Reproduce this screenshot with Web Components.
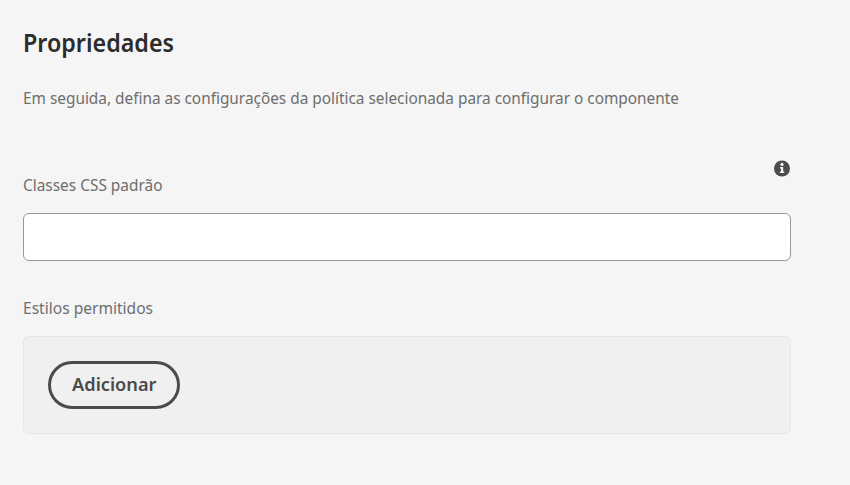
<!DOCTYPE html>
<html lang="pt-BR"><head><meta charset="utf-8"><title>Propriedades</title>
<style>html,body{margin:0;background:#f5f5f5}body{font-family:"Noto Sans","Open Sans",sans-serif}</style></head>
<body>
<policy-properties>
<section-heading slot="heading">Propriedades</section-heading>
<fitted-text slot="description" width="656">Em seguida, defina as configurações da política selecionada para configurar o componente</fitted-text>
<text-field>Classes CSS padrão</text-field>
<style-list>Estilos permitidos</style-list>
</policy-properties>
<script>
class Base extends HTMLElement{constructor(){super();this.attachShadow({mode:'open'}).innerHTML=this.constructor.markup}}
class FittedText extends Base{
static markup=`<style>:host{display:block;white-space:nowrap;height:24px;line-height:24px;font-size:16.8px}span{display:inline-block;transform-origin:0 50%}</style><span><slot></slot></span>`;
connectedCallback(){const s=this.shadowRoot.querySelector('span');const w=s.getBoundingClientRect().width,t=+this.getAttribute('width');if(w&&t)s.style.transform=`scaleX(${t/w})`}}
customElements.define('fitted-text',FittedText);
class SectionHeading extends Base{static markup=`<style>:host{display:block;font-weight:600;color:#2c2c2c}fitted-text{font-size:24.5px;height:32px;line-height:32px}</style><fitted-text width="151"><slot></slot></fitted-text>`}
customElements.define('section-heading',SectionHeading);
class InfoIcon extends Base{static markup=`<style>:host{display:block;width:16px;height:17px}svg{display:block}</style><svg width="16" height="17" viewBox="0 0 16 17"><circle cx="8" cy="8.5" r="8" fill="#4b4b4b"/><circle cx="8" cy="4.4" r="1.6" fill="#f5f5f5"/><path d="M6 7h3.2v4.6h1V13H5.8v-1.4H7V8.4H6z" fill="#f5f5f5"/></svg>`}
customElements.define('info-icon',InfoIcon);
class TextField extends Base{static markup=`<style>:host{display:block}.top{height:16px;display:flex;justify-content:flex-end;padding-right:1px}fitted-text{margin-top:-3px}input{box-sizing:border-box;display:block;width:100%;height:48px;margin:16px 0 0;border:1px solid #999;border-radius:6px;background:#fff;outline:0;padding:0 16px}</style><div class="top"><info-icon></info-icon></div><fitted-text width="139.5"><slot></slot></fitted-text><input aria-label="Classes CSS padrão">`}
customElements.define('text-field',TextField);
class PillButton extends Base{static markup=`<style>:host{display:block}button{box-sizing:border-box;display:flex;align-items:center;justify-content:center;width:132px;height:48px;border:3px solid #4b4b4b;border-radius:24px;background:#f0f0f0;color:#4b4b4b;font-family:inherit;font-weight:600;padding:0 0 2px}fitted-text{width:85px;font-size:18.6px;text-align:left}</style><button><fitted-text width="84.5"><slot></slot></fitted-text></button>`}
customElements.define('pill-button',PillButton);
class StyleList extends Base{static markup=`<style>:host{display:block;margin-top:35px}.box{box-sizing:border-box;height:98px;margin-top:16px;padding:24px;border:1px solid #e6e6e6;border-radius:6px;background:#f0f0f0}</style><fitted-text width="130"><slot></slot></fitted-text><div class="box"><pill-button>Adicionar</pill-button></div>`}
customElements.define('style-list',StyleList);
class PolicyProperties extends Base{static markup=`<style>:host{display:block;box-sizing:border-box;width:850px;height:485px;padding:27px 59px 0 23px;color:#6e6e6e}.desc{margin:27px 0 50px}</style><slot name="heading"></slot><div class="desc"><slot name="description"></slot></div><slot></slot>`}
customElements.define('policy-properties',PolicyProperties);
</script></body></html>
